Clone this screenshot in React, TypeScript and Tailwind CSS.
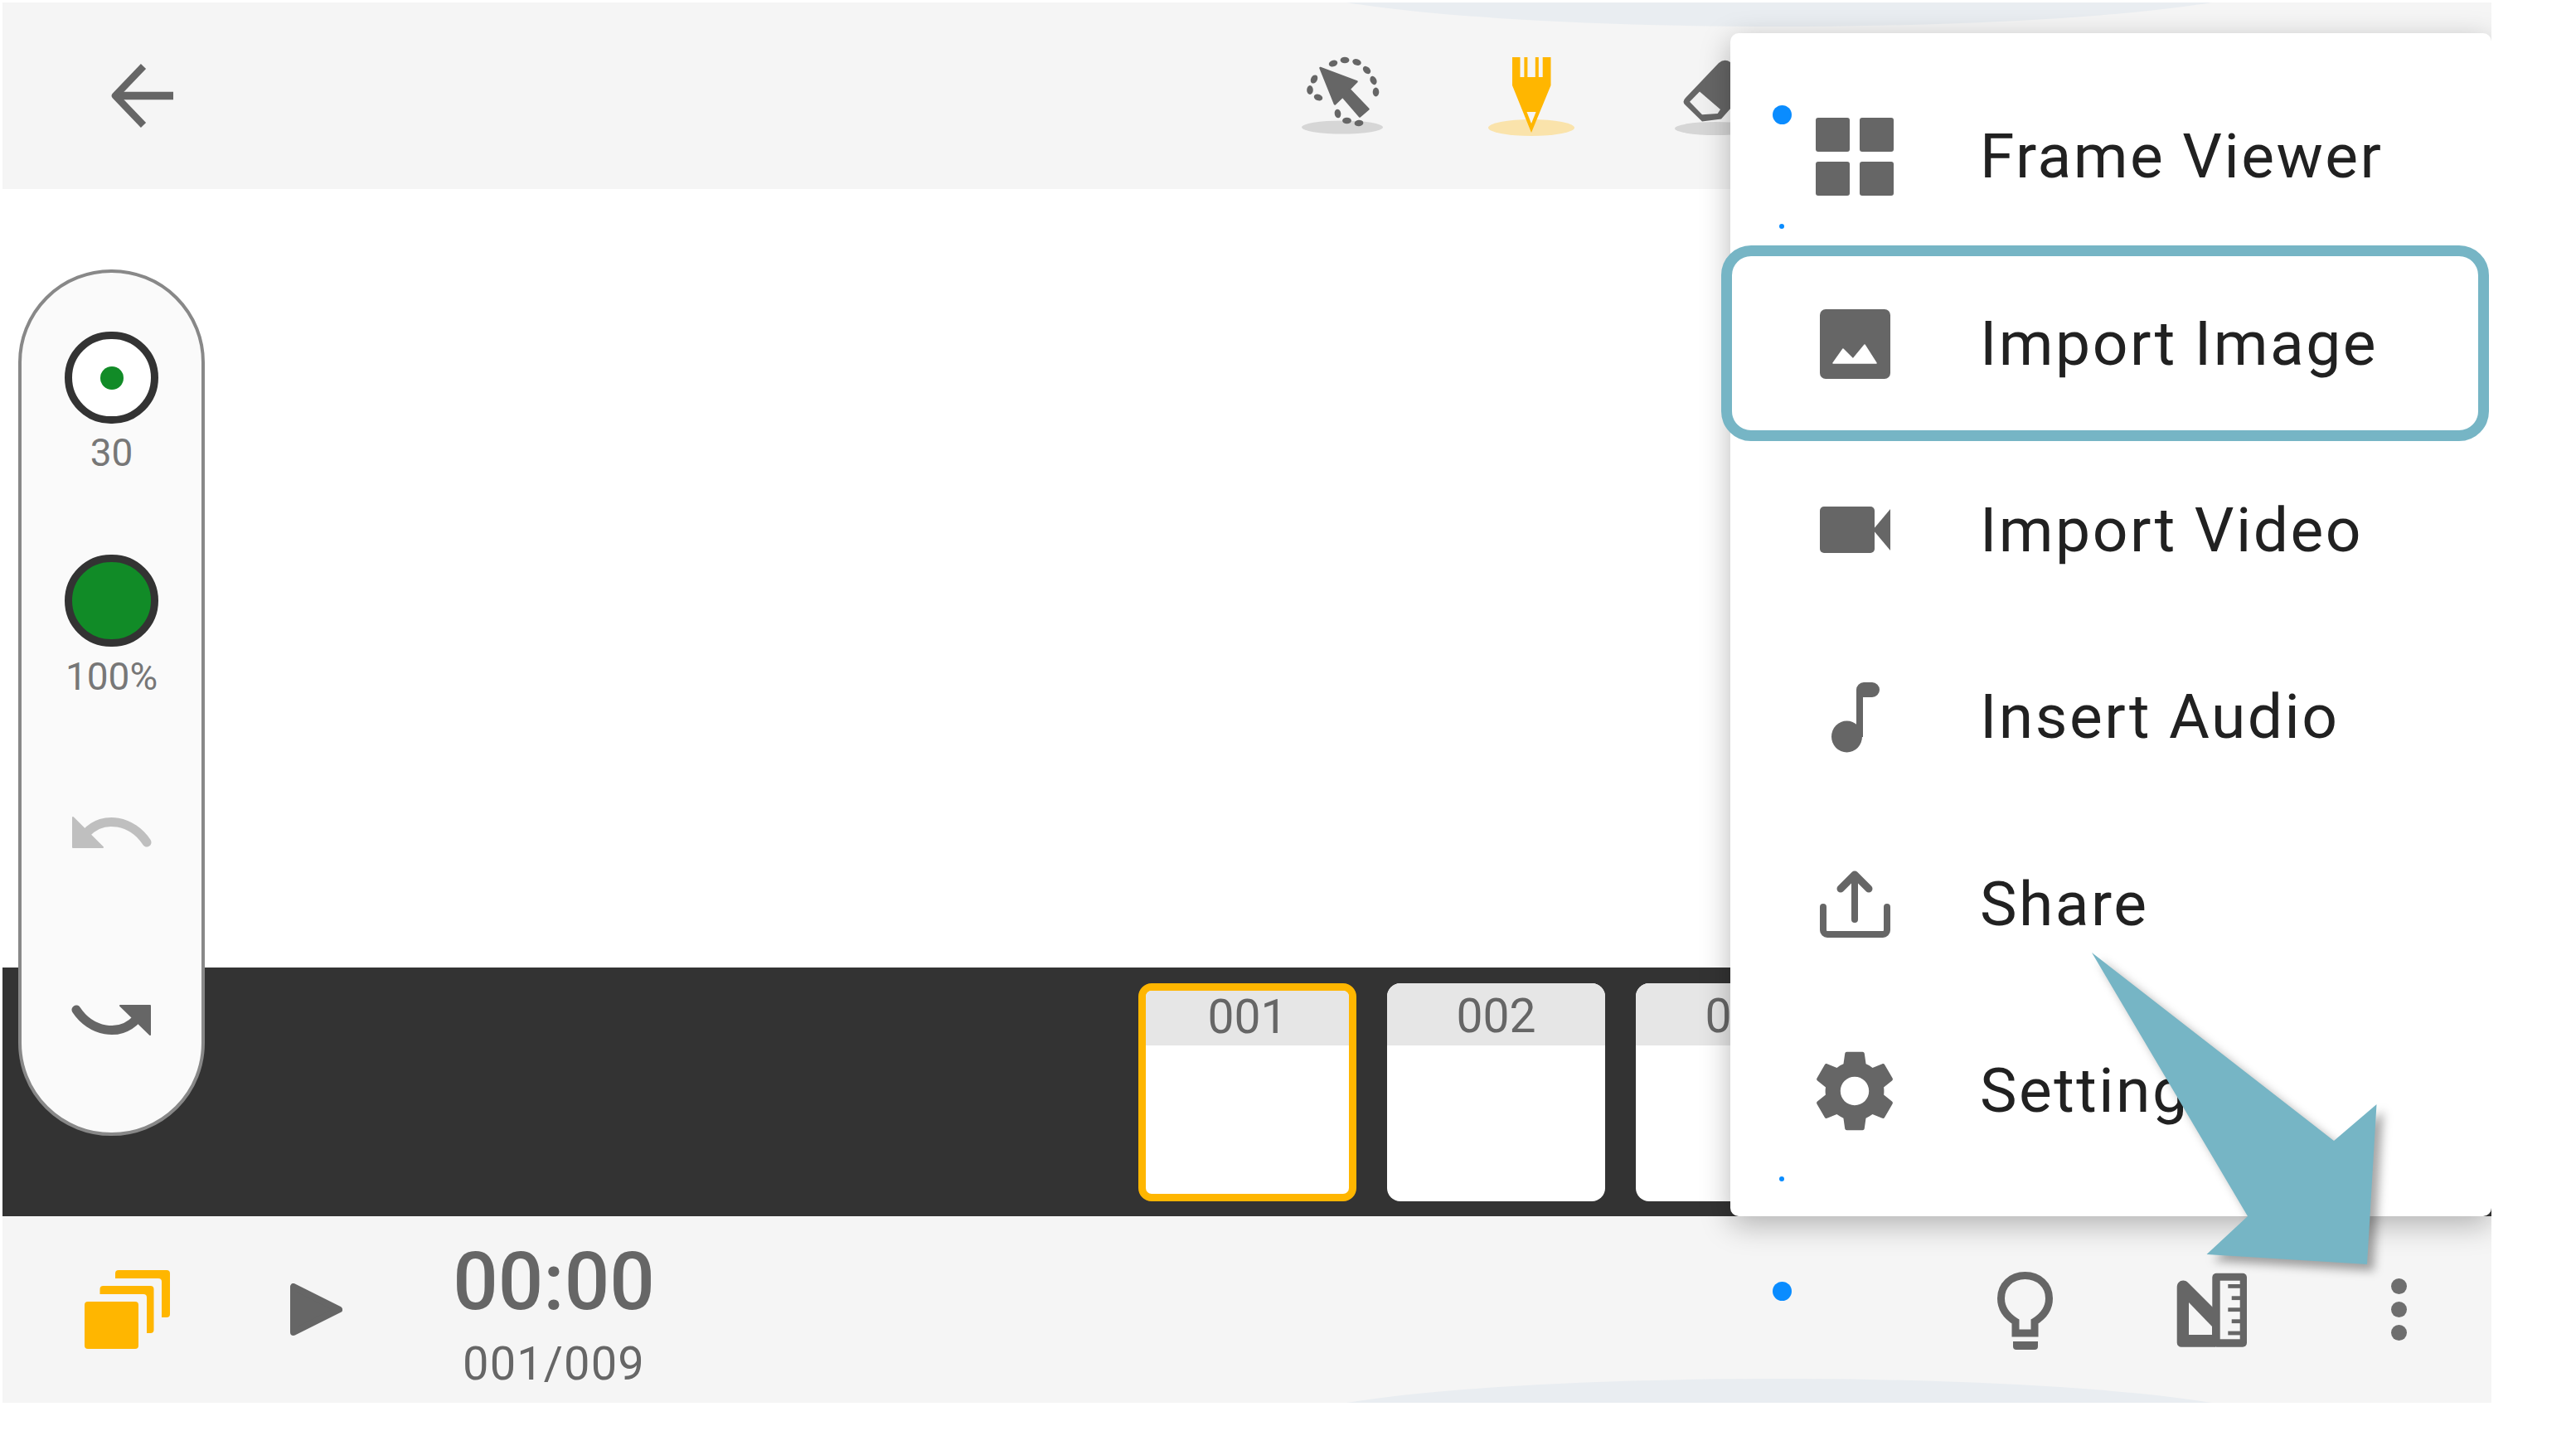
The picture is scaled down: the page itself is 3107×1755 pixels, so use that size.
import React from 'react';

const GRAY = '#666666';
const AMBER = '#ffb600';

// x, y, tilt of each dash round the selection ring
const selectionDots = [
  [1622, 71.5, 0], [1608, 75.5, -20], [1636.5, 74, 20], [1648.5, 83.5, 45], [1656.5, 96, 65], [1659.5, 110, 90],
  [1585, 94.5, -60], [1580, 107.5, 90], [1590, 116.5, 20], [1613.5, 136, 80], [1624.5, 144.5, 0], [1639, 147.5, -5],
];

const SelectTool = () => (
  <svg viewBox="1554 60 130 110" className="w-[130px] h-[110px] shrink-0">
    <ellipse cx="1619" cy="152.5" rx="49" ry="8" fill="#d6d6d6" />
    {selectionDots.map(([x, y, a]) => (
      <ellipse key={`${x}-${y}`} cx={x} cy={y} rx="5.4" ry="3.8" fill={GRAY} transform={`rotate(${a} ${x} ${y})`} />
    ))}
    <path d="M1592.5 81L1636.5 97.5L1627.5 106.7L1650.5 130.5L1640 139.5L1619.3 115.5L1610 124.5Z" fill={GRAY} stroke={GRAY} strokeWidth="2.5" strokeLinejoin="round" />
  </svg>
);

const PenTool = () => (
  <svg viewBox="1782 60 130 110" className="w-[130px] h-[110px] shrink-0 ml-[98px]">
    <ellipse cx="1847" cy="153" rx="52" ry="10" fill="#fae3ab" />
    <path d="M1824 68H1833.5V92H1838.4V68H1842.4V92H1851.8V68H1855.8V92H1860.7V68H1870.5V102L1847 159L1824 102Z" fill={AMBER} />
    <path d="M1841.5 134H1852.6L1847 148Z" fill="#f5f5f5" />
  </svg>
);

const EraserTool = () => (
  <svg viewBox="2005 60 130 110" className="w-[130px] h-[110px] shrink-0 ml-[93px]">
    <ellipse cx="2069" cy="154" rx="49" ry="8" fill="#d6d6d6" />
    <path d="M2033 117L2073 75Q2080 69 2087 74L2105 90V110L2076 142.5L2053 145.5L2033 126Q2028 122 2033 117Z" fill={GRAY} />
    <path d="M2050 109.5L2038 121.7L2053 137.3L2071.7 136L2075 131Z" fill="#f0f0f0" />
  </svg>
);

const BackArrow = () => (
  <svg viewBox="130 73 84 85" className="w-[84px] h-[85px] shrink-0">
    <path d="M209 115.5H145" stroke={GRAY} strokeWidth="9.5" fill="none" />
    <path d="M173 80L139 115.5L173 151" stroke={GRAY} strokeWidth="8.5" fill="none" strokeLinejoin="round" />
  </svg>
);

const FrameViewerIcon = () => (
  <svg viewBox="2177 130 120 120" className="w-[120px] h-[120px]" fill={GRAY}>
    <rect x="2190" y="143" width="41" height="41" rx="3" />
    <rect x="2243" y="143" width="41" height="41" rx="3" />
    <rect x="2190" y="196" width="41" height="41" rx="3" />
    <rect x="2243" y="196" width="41" height="41" rx="3" />
  </svg>
);

const ImageIcon = () => (
  <svg viewBox="2177 355 120 120" className="w-[120px] h-[120px]">
    <rect x="2195" y="374" width="85" height="84" rx="7" fill={GRAY} />
    <path d="M2211 439L2223 422L2235 434L2249 417L2263 439Z" fill="#ffffff" stroke="#ffffff" strokeWidth="1.5" strokeLinejoin="round" />
  </svg>
);

const VideoIcon = () => (
  <svg viewBox="2177 581 120 120" className="w-[120px] h-[120px]" fill={GRAY}>
    <rect x="2195" y="613" width="66" height="56" rx="5" />
    <path d="M2259 641L2280 616V666Z" />
  </svg>
);

const MusicIcon = () => (
  <svg viewBox="2177 806 120 120" className="w-[120px] h-[120px]" fill={GRAY}>
    <ellipse cx="2227.5" cy="889.5" rx="18.5" ry="19" />
    <path d="M2239 890V833a9 9 0 0 1 9-9h10a9 9 0 0 1 0 18h-11v48z" />
  </svg>
);

const ShareIcon = () => (
  <svg viewBox="2177 1032 120 120" className="w-[120px] h-[120px]" fill="none" stroke={GRAY} strokeLinecap="round" strokeLinejoin="round">
    <path d="M2237 1058V1111" strokeWidth="8" />
    <path d="M2220 1074L2237 1057L2254 1074" strokeWidth="9" />
    <path d="M2199 1096V1124a5 5 0 0 0 5 5H2271a5 5 0 0 0 5-5V1096" strokeWidth="8" />
  </svg>
);

const GearIcon = () => (
  <svg viewBox="0 0 24 24" className="w-[118px] h-[118px]" fill={GRAY}>
    <path d="M19.14 12.94c.04-.3.06-.61.06-.94 0-.32-.02-.64-.07-.94l2.03-1.58c.18-.14.23-.41.12-.61l-1.92-3.32c-.12-.22-.37-.29-.59-.22l-2.39.96c-.5-.38-1.03-.7-1.62-.94l-.36-2.54c-.04-.24-.24-.41-.48-.41h-3.84c-.24 0-.43.17-.47.41l-.36 2.54c-.59.24-1.13.57-1.62.94l-2.39-.96c-.22-.08-.47 0-.59.22L2.74 8.87c-.12.21-.08.47.12.61l2.03 1.58c-.05.3-.09.63-.09.94s.02.64.07.94l-2.03 1.58c-.18.14-.23.41-.12.61l1.92 3.32c.12.22.37.29.59.22l2.39-.96c.5.38 1.03.7 1.62.94l.36 2.54c.05.24.24.41.48.41h3.84c.24 0 .44-.17.47-.41l.36-2.54c.59-.24 1.13-.56 1.62-.94l2.39.96c.22.08.47 0 .59-.22l1.92-3.32c.12-.22.07-.47-.12-.61l-2.01-1.58zM12 15.5c-1.93 0-3.5-1.57-3.5-3.5s1.57-3.5 3.5-3.5 3.5 1.57 3.5 3.5-1.57 3.5-3.5 3.5z" />
  </svg>
);

const RulerIcon = () => (
  <svg viewBox="2625 1530 87 94" className="w-[87px] h-[94px] shrink-0 ml-[145px]" fill={GRAY}>
    <rect x="2668.3" y="1532.7" width="41.7" height="89" rx="5" />
    <path d="M2625.7 1550C2625.7 1541 2635 1539 2640 1545L2672 1577V1621.7H2631a5.3 5.3 0 0 1-5.3-5.3Z" />
    <path d="M2640 1568L2668 1597V1607H2640Z" fill="#f5f5f5" />
    <rect x="2677.7" y="1541.7" width="24" height="70.6" fill="#f5f5f5" />
    <rect x="2687.3" y="1546" width="15" height="4.8" />
    <rect x="2691.7" y="1560.3" width="10.5" height="4.8" />
    <rect x="2687.3" y="1574.3" width="15" height="4.8" />
    <rect x="2691.7" y="1588.3" width="10.5" height="4.8" />
    <rect x="2687.3" y="1602.6" width="15" height="4.8" />
  </svg>
);

const menuItems = [
  { label: 'Frame Viewer', icon: <FrameViewerIcon /> },
  { label: 'Import Image', icon: <ImageIcon /> },
  { label: 'Import Video', icon: <VideoIcon /> },
  { label: 'Insert Audio', icon: <MusicIcon /> },
  { label: 'Share', icon: <ShareIcon /> },
  { label: 'Settings', icon: <GearIcon /> },
];

const Thumb = ({ label, active }: { label: string; active?: boolean }) => (
  <div className={`w-[263px] h-[263px] shrink-0 rounded-[16px] overflow-hidden bg-white flex flex-col ${active ? 'border-[9px] border-[#ffb600]' : ''}`}>
    <div className={`bg-[#e6e6e6] flex items-center justify-center text-[57px] leading-none text-[#666666] ${active ? 'h-[66px] pb-[3px]' : 'h-[75px] pt-[5px]'}`}>
      {label}
    </div>
  </div>
);

const SidePill = () => (
  <div className="absolute left-[19px] top-[322px] w-[225px] h-[1045px] rounded-[112px] border-4 border-[#888888] bg-[#fafafa] flex flex-col items-center pt-[71px]">
    <div className="w-[113px] h-[111px] rounded-full border-[9px] border-[#333333] bg-white flex items-center justify-center">
      <div className="w-[28px] h-[28px] rounded-full bg-[#118b27]" />
    </div>
    <div className="mt-[12px] text-[46px] leading-none text-[#777777]">30</div>
    <div className="mt-[100px] w-[113px] h-[111px] rounded-full border-[9px] border-[#333333] bg-[#118b27]" />
    <div className="mt-[13px] text-[46px] leading-none text-[#777777]">100%</div>
    <svg viewBox="85 984 99 42" className="mt-[144px] w-[99px] h-[42px]">
      <path d="M177 1017C160 991 125 983 104 1006" fill="none" stroke="#bfbfbf" strokeWidth="11" strokeLinecap="round" />
      <path d="M88 987L88 1023H124Z" fill="#bfbfbf" stroke="#bfbfbf" strokeWidth="2" strokeLinejoin="round" />
    </svg>
    <svg viewBox="85 1209 99 42" className="mt-[185px] w-[99px] h-[42px]">
      <path d="M92 1217C109 1243 144 1251 165 1228" fill="none" stroke={GRAY} strokeWidth="11" strokeLinecap="round" />
      <path d="M181 1247L181 1212H145Z" fill={GRAY} stroke={GRAY} strokeWidth="2" strokeLinejoin="round" />
    </svg>
  </div>
);

const App: React.FC = () => {
  return (
    <div className="w-[3107px] h-[1755px] bg-white pl-[3px] pt-[3px] font-['Roboto',sans-serif]">
      <div className="relative w-[3002px] h-[1689px] overflow-hidden flex flex-col">
        {/* Top toolbar */}
        <div className="relative h-[225px] shrink-0 bg-[#f5f5f5] overflow-hidden flex items-center pl-[127px]">
          <div className="absolute left-[1533px] top-[-91px] w-[1220px] h-[120px] rounded-[50%] bg-[#e9edf1]" />
          <BackArrow />
          <div className="relative flex items-center ml-[1340px]">
            <SelectTool />
            <PenTool />
            <EraserTool />
          </div>
        </div>

        {/* Canvas */}
        <div className="h-[939px] shrink-0 bg-white" />

        {/* Frame strip */}
        <div className="h-[300px] shrink-0 bg-[#333333] flex items-center gap-[37px] pl-[1370px] overflow-hidden">
          <Thumb label="001" active />
          <Thumb label="002" />
          <Thumb label="003" />
        </div>

        {/* Bottom toolbar */}
        <div className="relative h-[225px] shrink-0 bg-[#f5f5f5] overflow-hidden flex items-center pl-[97px] pr-[102px]">
          <div className="absolute left-[1533px] top-[196px] w-[1220px] h-[120px] rounded-[50%] bg-[#e9edf1]" />
          <svg viewBox="100 1530 106 99" className="relative w-[106px] h-[99px] shrink-0" fill={AMBER}>
            <rect x="139" y="1532" width="66" height="57" rx="4" />
            <rect x="129" y="1542" width="66" height="57" rx="4" fill="#f5f5f5" />
            <rect x="120.5" y="1551" width="65" height="57" rx="4" />
            <rect x="111" y="1561" width="66" height="57" rx="4" fill="#f5f5f5" />
            <rect x="102" y="1570" width="65" height="57" rx="4" />
          </svg>
          <svg viewBox="350 1548 63 63" className="w-[63px] h-[63px] shrink-0 ml-[144px]">
            <path d="M354 1552V1607L409 1579.5Z" fill={GRAY} stroke={GRAY} strokeWidth="8" strokeLinejoin="round" />
          </svg>
          <div className="w-[240px] ml-[135px] self-start mt-[31px] flex flex-col items-center text-[#666666]">
            <div className="text-[96px] leading-none font-medium">00:00</div>
            <div className="mt-[23px] text-[56px] leading-none tracking-[0.02em]">001/009</div>
          </div>
          <div className="relative ml-auto flex items-center">
            <svg viewBox="2405 1528 75 100" className="w-[75px] h-[100px] shrink-0">
              <path d="M2431 1606V1592C2418 1584 2413.5 1575 2413.5 1564C2413.5 1548 2426 1536.5 2442.5 1536.5C2459 1536.5 2471.5 1548 2471.5 1564C2471.5 1575 2467 1584 2454 1592V1606Z" fill="none" stroke={GRAY} strokeWidth="9" />
              <path d="M2428 1616H2458V1622a4 4 0 0 1-4 4H2432a4 4 0 0 1-4-4Z" fill={GRAY} />
            </svg>
            <RulerIcon />
            <div className="ml-[172px] flex flex-col gap-[9px]">
              <div className="w-[19px] h-[19px] rounded-full bg-[#6e6e6e]" />
              <div className="w-[19px] h-[19px] rounded-full bg-[#6e6e6e]" />
              <div className="w-[19px] h-[19px] rounded-full bg-[#6e6e6e]" />
            </div>
          </div>
        </div>

        <SidePill />

        {/* Overflow menu */}
        <div className="absolute left-[2084px] top-[37px] w-[918px] h-[1427px] rounded-[10px] bg-white shadow-[0_10px_36px_rgba(0,0,0,0.28)] flex flex-col py-[36px]">
          {menuItems.map((item) => (
            <div key={item.label} className="h-[225.4px] shrink-0 flex items-center pl-[90px]">
              <div className="w-[120px] h-[120px] flex items-center justify-center shrink-0">{item.icon}</div>
              <div className="ml-[91px] text-[75px] leading-none tracking-[0.033em] text-[#212121]">{item.label}</div>
            </div>
          ))}
        </div>

        {/* Highlight on the Import Image row */}
        <div className="absolute left-[2073px] top-[293px] w-[926px] h-[236px] rounded-[36px] border-[13px] border-[#76b5c5]" />

        {/* Stray markers over the page */}
        <div className="absolute left-[2135px] top-[124px] w-[23px] h-[23px] rounded-full bg-[#0a8cff]" />
        <div className="absolute left-[2143px] top-[267px] w-[6px] h-[6px] rounded-full bg-[#0a8cff]" />
        <div className="absolute left-[2143px] top-[1416px] w-[6px] h-[6px] rounded-full bg-[#0a8cff]" />
        <div className="absolute left-[2135px] top-[1543px] w-[23px] h-[23px] rounded-full bg-[#0a8cff]" />

        {/* Callout arrow */}
        <svg viewBox="2500 1130 400 420" className="absolute left-[2497px] top-[1127px] w-[400px] h-[420px] drop-shadow-[8px_8px_6px_rgba(0,0,0,0.35)]">
          <path d="M2523 1149L2815 1376L2866.5 1332L2855 1525L2661.5 1513L2711 1467Z" fill="#76b5c5" />
        </svg>
      </div>
    </div>
  );
};

export default App;
